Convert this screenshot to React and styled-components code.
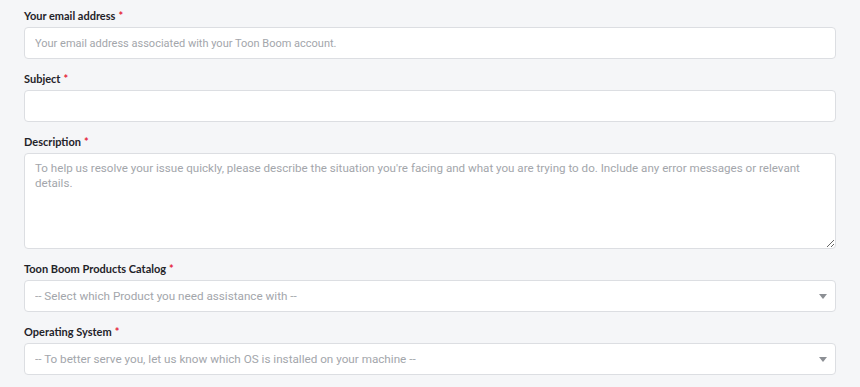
import React from 'react';
import styled, { createGlobalStyle } from 'styled-components';

const GlobalStyle = createGlobalStyle`
  html, body {
    margin: 0;
    padding: 0;
    background: #f5f6f8;
  }
  * {
    box-sizing: border-box;
  }
`;

const Form = styled.form`
  display: flex;
  flex-direction: column;
  padding: 6px 24px 0 24px;
  width: 860px;
`;

const Field = styled.div`
  display: flex;
  flex-direction: column;
  margin-bottom: 10px;
`;

const Label = styled.label`
  font-family: 'Lato', 'Liberation Sans', sans-serif;
  font-weight: 700;
  font-size: 11px;
  line-height: 19px;
  color: #1f2329;
  margin-bottom: 2px;
`;

const Required = styled.span`
  color: #e5243b;
  margin-left: 3px;
`;

const inputBase = `
  width: 100%;
  background: #ffffff;
  border: 1px solid #dcdee2;
  border-radius: 4px;
  font-family: 'Roboto', 'Liberation Sans', Arial, sans-serif;
  font-size: 11px;
  color: #2a2e33;
  outline: none;
  &::placeholder {
    color: #a3a6ab;
  }
`;

const Input = styled.input`
  ${inputBase}
  height: 32px;
  padding: 0 10px;
`;

const TextArea = styled.textarea`
  ${inputBase}
  font-size: 11.6px;
  height: 96px;
  padding: 7px 10px;
  line-height: 15px;
  resize: vertical;
`;

const SelectWrap = styled.div`
  position: relative;
`;

const Select = styled.select`
  ${inputBase}
  font-size: 11.7px;
  height: 32px;
  padding: 0 28px 0 10px;
  appearance: none;
  -webkit-appearance: none;
  color: #a3a6ab;
`;

const Caret = styled.svg`
  position: absolute;
  right: 9px;
  top: 14px;
  pointer-events: none;
`;

const Dropdown = ({ placeholder }) => (
  <SelectWrap>
    <Select defaultValue="">
      <option value="" disabled>
        {placeholder}
      </option>
    </Select>
    <Caret width="8" height="5" viewBox="0 0 8 5">
      <path d="M0 0 H8 L4 5 Z" fill="#8c8f94" />
    </Caret>
  </SelectWrap>
);

const App = () => {
  return (
    <>
      <GlobalStyle />
      <Form>
        <Field>
          <Label>
            Your email address<Required>*</Required>
          </Label>
          <Input placeholder="Your email address associated with your Toon Boom account." />
        </Field>
        <Field>
          <Label>
            Subject<Required>*</Required>
          </Label>
          <Input />
        </Field>
        <Field>
          <Label>
            Description<Required>*</Required>
          </Label>
          <TextArea placeholder="To help us resolve your issue quickly, please describe the situation you're facing and what you are trying to do. Include any error messages or relevant details." />
        </Field>
        <Field>
          <Label>
            Toon Boom Products Catalog<Required>*</Required>
          </Label>
          <Dropdown placeholder="-- Select which Product you need assistance with --" />
        </Field>
        <Field>
          <Label>
            Operating System<Required>*</Required>
          </Label>
          <Dropdown placeholder="-- To better serve you, let us know which OS is installed on your machine --" />
        </Field>
      </Form>
    </>
  );
};

export default App;
